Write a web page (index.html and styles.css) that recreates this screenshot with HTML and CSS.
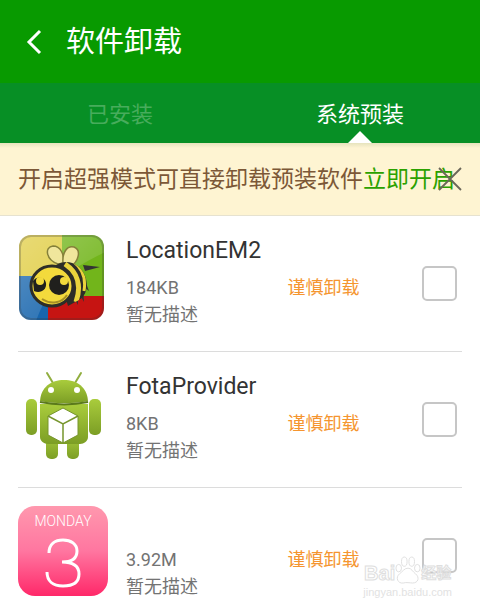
FILE: index.html
```html
<!DOCTYPE html>
<html lang="zh-CN">
<head>
  <meta charset="utf-8">
  <meta name="viewport" content="width=device-width, initial-scale=1">
  <title>软件卸载</title>
  <link rel="stylesheet" href="styles.css">
</head>
<body>
  <header class="header">
    <button class="back" type="button" aria-label="返回">
      <svg width="16" height="26" viewBox="0 0 16 26" fill="none" stroke="#fff" stroke-width="3">
        <path d="M14 2 3 13 14 24"/>
      </svg>
    </button>
    <h1>软件卸载</h1>
  </header>

  <nav class="tabs">
    <a class="tab" href="#installed">已安装</a>
    <a class="tab active" href="#system" aria-current="page">系统预装</a>
  </nav>

  <div class="notice">
    <p>开启超强模式可直接卸载预装软件<a href="#enable">立即开启</a></p>
    <button class="close" type="button" aria-label="关闭">
      <svg width="24" height="24" viewBox="0 0 24 24" stroke="#6b6759" stroke-width="1.8">
        <path d="M1 1 23 23M23 1 1 23"/>
      </svg>
    </button>
  </div>

  <ul class="apps">
    <li class="app">
      <svg class="icon" viewBox="0 0 90 90" aria-hidden="true">
        <defs>
          <clipPath id="tile"><rect x="1" y="1" width="85" height="85" rx="12"/></clipPath>
          <clipPath id="tail"><path d="M38 31C50 24 62 30 67 42 71 52 68 62 61 66L50 72Z"/></clipPath>
          <linearGradient id="gloss" x1="0" y1="0" x2="1" y2="1">
            <stop offset="0" stop-color="#fff" stop-opacity=".3"/>
            <stop offset="1" stop-color="#fff" stop-opacity="0"/>
          </linearGradient>
        </defs>
        <g clip-path="url(#tile)">
          <path fill="#dfcb3c" d="M0 0h44v42H0z"/>
          <path fill="#72b51b" d="M44 0h43v62H44z"/>
          <path fill="#1765ad" d="M0 42h44v45H0z"/>
          <path fill="#c61412" d="M30 62h57v25H30z"/>
          <path fill="url(#gloss)" d="M0 0h87v18C65 30 35 40 18 87H0z"/>
        </g>
        <rect x="2" y="2" width="83" height="83" rx="11" fill="none" stroke="#333" stroke-opacity=".25" stroke-width="2"/>
        <g fill="#f0e69c" stroke="#85803a" stroke-width="1.5">
          <path d="M40 30C28 26 26 13 35 12c8 0 11 9 11 17z"/>
          <path d="M45 29c-1-10 4-18 11-16 8 3 4 15-3 19z"/>
        </g>
        <path fill="#333" d="M65 31l17 2-15 4zM55 62l5 9v-11zM61 59l5 9-1-12zM66 53l5 4-3-8z"/>
        <path fill="#2d2d28" d="M38 31C50 24 62 30 67 42 71 52 68 62 61 66L50 72Z"/>
        <g clip-path="url(#tail)" fill="none" stroke="#ead33c" stroke-width="5">
          <path d="M47 30c12 8 17 21 11 38"/>
          <path d="M56 28c9 7 12 17 10 29" stroke-width="3"/>
        </g>
        <ellipse cx="34" cy="52" rx="21" ry="20" fill="#f3da3c" stroke="#2d2d28" stroke-width="3"/>
        <circle cx="41" cy="51" r="10" fill="#20201d"/>
        <circle cx="46" cy="47" r="4" fill="#f3da3c"/>
        <path fill="#20201d" d="M15 47c4-6 12-4 13 2 1 7-6 11-12 8z"/>
        <circle cx="22" cy="47" r="4" fill="#f3da3c"/>
        <path d="M24 65c9 6 20 4 25-4" fill="none" stroke="#a68f25" stroke-width="2"/>
      </svg>
      <div class="info">
        <h2 class="name"><label for="app1">LocationEM2</label></h2>
        <div class="meta"><span class="size">184KB</span><span class="tag">谨慎卸载</span></div>
        <p class="desc">暂无描述</p>
      </div>
      <input class="check" id="app1" type="checkbox">
    </li>

    <li class="app">
      <svg class="icon" viewBox="0 0 90 90" aria-hidden="true">
        <defs>
          <linearGradient id="droid" x1="0" y1="0" x2="0" y2="1">
            <stop offset="0" stop-color="#a9cc3c"/>
            <stop offset="1" stop-color="#7c9e25"/>
          </linearGradient>
        </defs>
        <path d="M29 3l6 10M63 3l-6 10" stroke="#91ae3f" stroke-width="2" stroke-linecap="round"/>
        <g fill="url(#droid)">
          <rect x="8" y="29" width="11" height="36" rx="5"/>
          <rect x="71" y="29" width="12" height="36" rx="5"/>
          <rect x="28" y="64" width="12" height="25" rx="5"/>
          <rect x="49" y="64" width="12" height="25" rx="5"/>
          <path d="M22 34h48v33c0 4-4 7-8 7H30c-4 0-8-3-8-7z"/>
          <path d="M22 31C23 17 33 10 46 10s23 7 24 21c-14 3-34 3-48 0z"/>
        </g>
        <path d="M22 32c15 3 33 3 48 0" fill="none" stroke="#5b7a1b" stroke-width="2"/>
        <circle cx="33" cy="20" r="3" fill="#fff"/>
        <circle cx="59" cy="20" r="3" fill="#fff"/>
        <path fill="#fff" stroke="#76952c" stroke-width="1" d="M45 38l15 8v19l-15 8-15-8V46z"/>
        <path fill="none" stroke="#76952c" stroke-width="1.5" d="M30 46l15 8 15-8M45 54v19"/>
      </svg>
      <div class="info">
        <h2 class="name"><label for="app2">FotaProvider</label></h2>
        <div class="meta"><span class="size">8KB</span><span class="tag">谨慎卸载</span></div>
        <p class="desc">暂无描述</p>
      </div>
      <input class="check" id="app2" type="checkbox">
    </li>

    <li class="app">
      <div class="icon calendar" aria-hidden="true">
        <span class="weekday">MONDAY</span>
        <svg width="36" height="52" viewBox="0 0 36 52" fill="none" stroke="#fff" stroke-width="3">
          <path d="M4 16C4 7 10 3 18 3s14 4 14 11-5 11-15 11c11 0 17 4 17 12s-6 12-16 12S2 44 2 35"/>
        </svg>
      </div>
      <div class="info">
        <h2 class="name"></h2>
        <div class="meta"><span class="size">3.92M</span><span class="tag">谨慎卸载</span></div>
        <p class="desc">暂无描述</p>
      </div>
      <input class="check" id="app3" type="checkbox" aria-label="3.92M">
    </li>
  </ul>

  <div class="watermark">
    <div class="brand">
      <span>Bai</span>
      <svg width="26" height="30" viewBox="0 0 28 30" aria-hidden="true">
        <g fill="#fff" stroke="#dedede">
          <ellipse cx="4" cy="13" rx="3" ry="4"/>
          <ellipse cx="10" cy="6" rx="3" ry="5"/>
          <ellipse cx="18" cy="6" rx="3" ry="5"/>
          <ellipse cx="24" cy="13" rx="3" ry="4"/>
          <path d="M14 13c4 0 5 4 8 6 5 4 3 10-3 10-3 0-7-1-10 0-6 1-9-6-4-10 3-2 5-6 9-6z"/>
        </g>
        <text x="14" y="27" text-anchor="middle" class="du">du</text>
      </svg>
      <span class="brand-cn">经验</span>
    </div>
    <div class="site">jingyan.baidu.com</div>
  </div>
</body>
</html>
```
FILE: styles.css
```css
* {
  box-sizing: border-box;
}

body {
  margin: 0;
  height: 100vh;
  overflow: hidden;
  position: relative;
  display: flex;
  flex-direction: column;
  background: #fff;
  font-family: Roboto, "Noto Sans CJK SC", sans-serif;
}

h1, h2, p, ul {
  margin: 0;
  padding: 0;
  font-weight: 400;
}

button {
  padding: 0;
  border: none;
  background: none;
  cursor: pointer;
}

a {
  text-decoration: none;
}

svg {
  display: block;
}

.header {
  flex: none;
  display: flex;
  align-items: center;
  gap: 24px;
  height: 83px;
  padding: 0 26px;
  background: #089a00;
  color: #fff;
}

.header h1 {
  font-size: 29px;
  line-height: 40px;
}

.tabs {
  flex: none;
  display: flex;
  height: 60px;
  background: #078f25;
}

.tab {
  flex: 1;
  position: relative;
  font-size: 22px;
  line-height: 64px;
  text-align: center;
  color: #47ac5c;
}

.tab.active {
  color: #fff;
}

.tab.active::after {
  content: "";
  position: absolute;
  left: 50%;
  bottom: 0;
  margin-left: -12px;
  border: 12px solid transparent;
  border-top: none;
  border-bottom-color: #fff;
}

.notice {
  flex: none;
  position: relative;
  height: 73px;
  padding: 0 18px;
  background: linear-gradient(#e6e3bd, #fef4d2 5px);
  border-bottom: 1px solid #e6e2d0;
  font-size: 23px;
  line-height: 74px;
  white-space: nowrap;
  color: #7c5837;
}

.notice a {
  color: #2ba100;
}

.close {
  position: absolute;
  top: 24px;
  right: 18px;
}

.apps {
  flex: 1;
  min-height: 0;
  overflow: hidden;
  padding: 0 18px;
  list-style: none;
}

.app {
  display: flex;
  align-items: center;
  height: 136px;
  border-bottom: 1px solid #dcdcdc;
}

.icon {
  flex: none;
  align-self: flex-start;
  width: 90px;
  height: 90px;
  margin: 18px 18px 0 0;
}

.info {
  flex: 1;
  min-width: 0;
  padding-bottom: 6px;
  font-size: 18px;
  line-height: 27px;
  color: #737373;
}

.name {
  height: 36px;
  margin-bottom: 5px;
  font-size: 23px;
  line-height: 36px;
  color: #333;
}

.meta {
  display: grid;
  grid-template-columns: 6fr 5fr;
}

.tag {
  color: #f5952f;
}

.check {
  appearance: none;
  flex: none;
  width: 35px;
  height: 35px;
  margin: 0 5px 0 0;
  border: 2px solid #c6c6c6;
  border-radius: 5px;
  background: #fff;
}

.check:checked {
  background: #089a00;
  border-color: #089a00;
}

.calendar {
  display: flex;
  flex-direction: column;
  align-items: center;
  padding-top: 6px;
  border-radius: 17px;
  background: linear-gradient(#ff98ae, #ff76a0 50%, #ff2869);
}

.weekday {
  margin-bottom: 7px;
  font-size: 14px;
  font-weight: 300;
  line-height: 18px;
  color: #fff;
}

/* watermark sits over the list */
.watermark {
  position: absolute;
  right: 28px;
  bottom: 10px;
  pointer-events: none;
  font-family: "Liberation Sans", "Noto Sans CJK SC", sans-serif;
}

.brand {
  display: flex;
  align-items: flex-end;
  justify-content: center;
  font-size: 20px;
  font-weight: 700;
  line-height: 24px;
  color: #fff;
  -webkit-text-stroke: 1px #dedede;
}

.brand-cn {
  font-size: 15px;
}

.du {
  fill: #fff;
  font-size: 12px;
}

.site {
  font-size: 11px;
  line-height: 14px;
  text-align: center;
  color: #e2e2e2;
}
```
